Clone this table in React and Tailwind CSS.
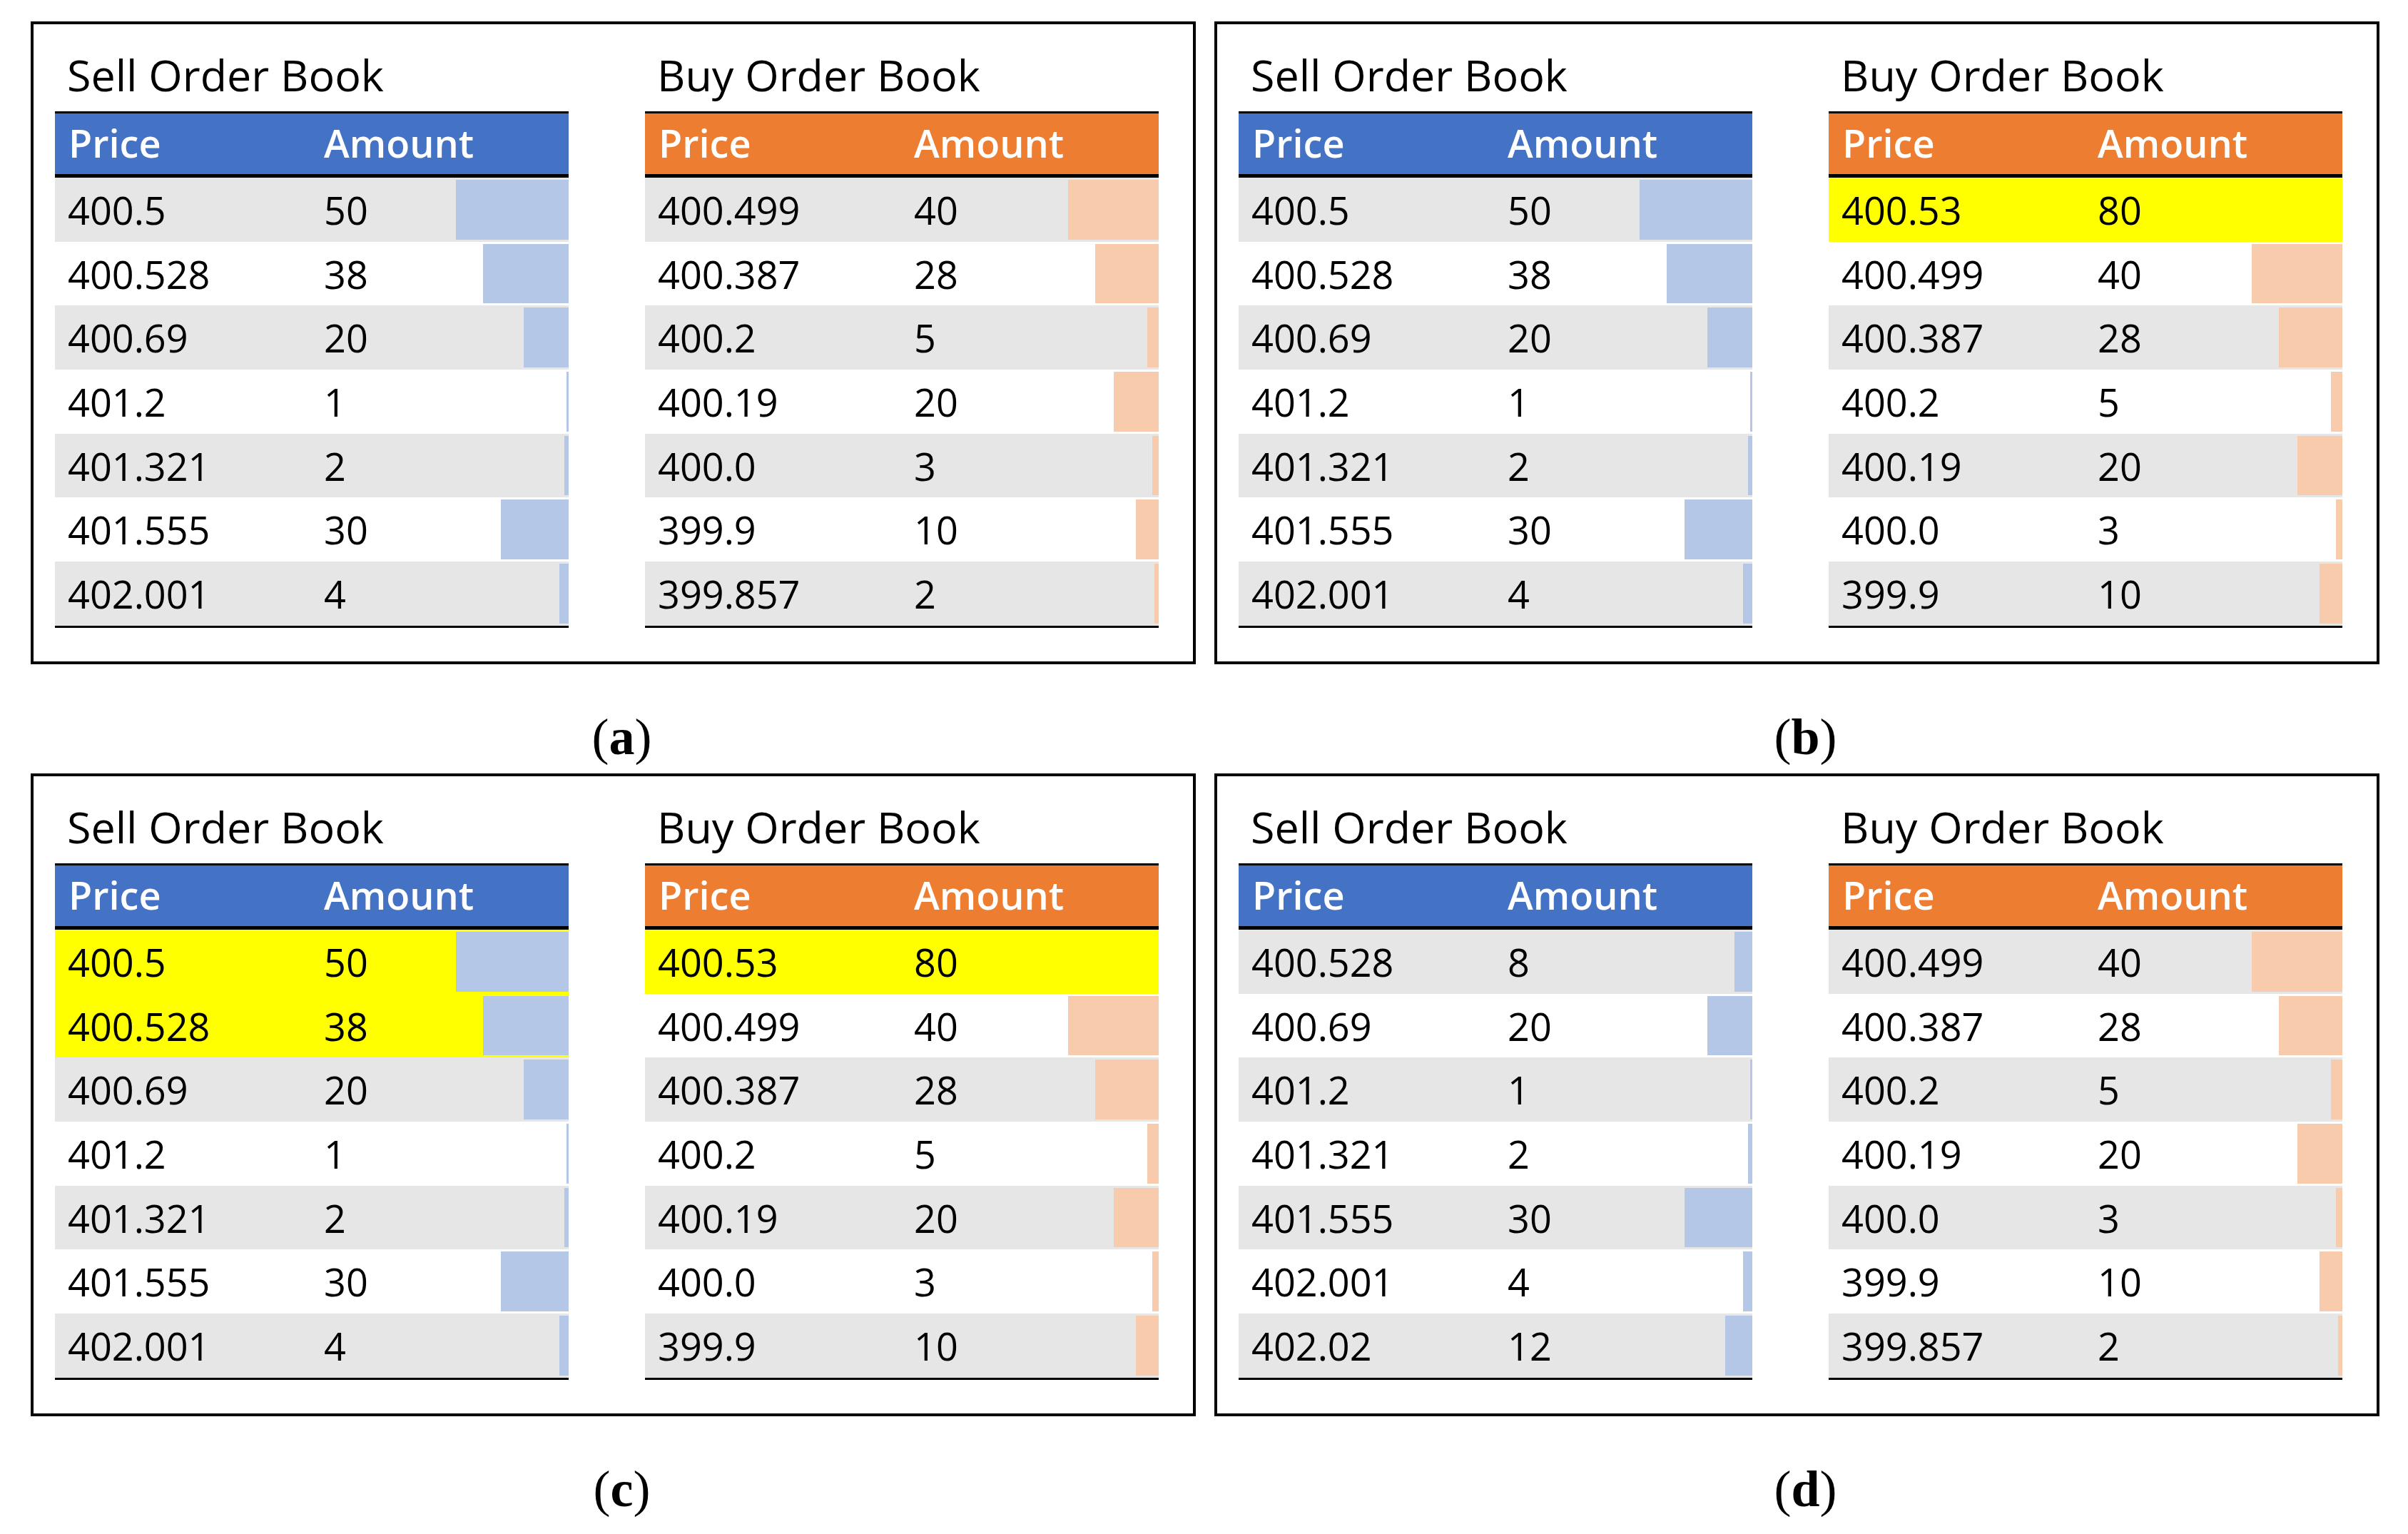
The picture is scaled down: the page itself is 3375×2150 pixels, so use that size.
import React from 'react';

const BAR = 3.17;

const sellA = [
    ['400.5', 50],
    ['400.528', 38],
    ['400.69', 20],
    ['401.2', 1],
    ['401.321', 2],
    ['401.555', 30],
    ['402.001', 4],
];

const buyA = [
    ['400.499', 40],
    ['400.387', 28],
    ['400.2', 5],
    ['400.19', 20],
    ['400.0', 3],
    ['399.9', 10],
    ['399.857', 2],
];

// new buy order sits at the top, highlighted
const buyB = [['400.53', 80, 'hl-nobar'], ...buyA.slice(0, 6)];

const sellC = sellA.map((r, i) => (i < 2 ? [r[0], r[1], 'hl'] : r));

const sellD = [
    ['400.528', 8],
    ['400.69', 20],
    ['401.2', 1],
    ['401.321', 2],
    ['401.555', 30],
    ['402.001', 4],
    ['402.02', 12],
];

const panels = [
    { label: 'a', sell: sellA, buy: buyA },
    { label: 'b', sell: sellA, buy: buyB },
    { label: 'c', sell: sellC, buy: buyB },
    { label: 'd', sell: sellD, buy: buyA },
];

const Book = ({ title, headClass, barClass, rows }) => (
    <div className="w-[720px]">
        <div className="h-[62px] mb-[20px] pl-[17px] text-[61px] leading-[62px] text-black whitespace-nowrap">
            {title}
        </div>
        <div className={`h-[93px] border-t-[3px] border-b-[5px] border-black flex items-center text-white font-semibold text-[54px] leading-[54px] ${headClass}`}>
            <span className="w-[377px] pl-[19px] pb-[3px]">Price</span>
            <span className="pb-[3px]">Amount</span>
        </div>
        <div className="border-b-[3px] border-black">
            {rows.map(([price, amount, flag], i) => {
                const bg = flag ? 'bg-[#ffff00]' : i % 2 === 0 ? 'bg-[#e7e6e6]' : 'bg-white';
                return (
                    <div key={i} className={`relative h-[89.7px] flex items-center text-[54px] leading-[54px] text-black ${bg}`}>
                        {flag !== 'hl-nobar' && (
                            <div
                                className={`absolute right-0 top-[3px] bottom-[3px] ${barClass}`}
                                style={{ width: amount * BAR }}
                            />
                        )}
                        <span className="relative w-[377px] pl-[18px]">{price}</span>
                        <span className="relative">{amount}</span>
                    </div>
                );
            })}
        </div>
    </div>
);

const Panel = ({ label, sell, buy }) => (
    <div>
        <div className="w-[1633px] h-[901px] border-4 border-black pt-[40px] pl-[30px] flex gap-[107px]">
            <Book title="Sell Order Book" headClass="bg-[#4472c4]" barClass="bg-[#b4c7e7]" rows={sell} />
            <Book title="Buy Order Book" headClass="bg-[#ed7d31]" barClass="bg-[#f8cbad]" rows={buy} />
        </div>
        <div className="h-[153px] pt-[66px] pl-[24px] flex justify-center font-['Liberation_Serif',serif] text-[72px] leading-[72px] text-black">
            <span>
                (<span className="font-bold">{label}</span>)
            </span>
        </div>
    </div>
);

const App = () => {
    return (
        <div className="w-[3375px] min-h-[2150px] bg-white pt-[30px] pl-[43px] font-['Open_Sans',sans-serif]">
            <div className="grid grid-cols-[1633px_1633px] gap-x-[26px]">
                {panels.map((p) => (
                    <Panel key={p.label} {...p} />
                ))}
            </div>
        </div>
    );
};

export default App;
